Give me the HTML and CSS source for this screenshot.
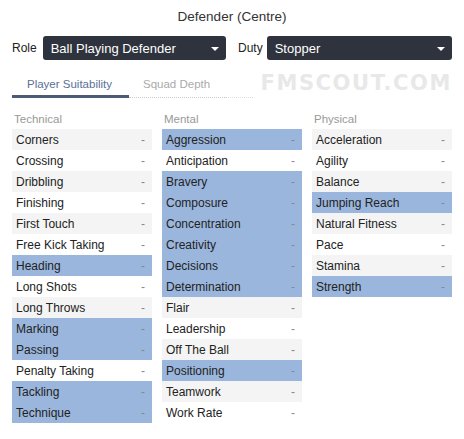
FILE: index.html
```html
<!DOCTYPE html>
<html>
<head>
<meta charset="utf-8">
<link rel="stylesheet" href="styles.css">
</head>
<body>
<div class="page">
  <div class="title">Defender (Centre)</div>
  <div class="selectors">
    <div class="sel">
      <span class="lbl">Role</span>
      <div class="dropdown"><span>Ball Playing Defender</span><span class="caret"></span></div>
    </div>
    <div class="sel duty">
      <span class="lbl">Duty</span>
      <div class="dropdown"><span>Stopper</span><span class="caret"></span></div>
    </div>
  </div>
  <div class="tabs">
    <div class="tab active">Player Suitability</div>
    <div class="tab">Squad Depth</div>
    <div class="tab-rest"></div>
    <div class="watermark">FMSCOUT.COM</div>
  </div>
  <div class="cols">
    <div class="col">
      <div class="head">Technical</div>
      <div class="row odd"><span>Corners</span><span class="d">-</span></div>
      <div class="row"><span>Crossing</span><span class="d">-</span></div>
      <div class="row odd"><span>Dribbling</span><span class="d">-</span></div>
      <div class="row"><span>Finishing</span><span class="d">-</span></div>
      <div class="row odd"><span>First Touch</span><span class="d">-</span></div>
      <div class="row"><span>Free Kick Taking</span><span class="d">-</span></div>
      <div class="row hl"><span>Heading</span><span class="d">-</span></div>
      <div class="row"><span>Long Shots</span><span class="d">-</span></div>
      <div class="row odd"><span>Long Throws</span><span class="d">-</span></div>
      <div class="row hl"><span>Marking</span><span class="d">-</span></div>
      <div class="row hl"><span>Passing</span><span class="d">-</span></div>
      <div class="row"><span>Penalty Taking</span><span class="d">-</span></div>
      <div class="row hl"><span>Tackling</span><span class="d">-</span></div>
      <div class="row hl"><span>Technique</span><span class="d">-</span></div>
    </div>
    <div class="col">
      <div class="head">Mental</div>
      <div class="row hl"><span>Aggression</span><span class="d">-</span></div>
      <div class="row"><span>Anticipation</span><span class="d">-</span></div>
      <div class="row hl"><span>Bravery</span><span class="d">-</span></div>
      <div class="row hl"><span>Composure</span><span class="d">-</span></div>
      <div class="row hl"><span>Concentration</span><span class="d">-</span></div>
      <div class="row hl"><span>Creativity</span><span class="d">-</span></div>
      <div class="row hl"><span>Decisions</span><span class="d">-</span></div>
      <div class="row hl"><span>Determination</span><span class="d">-</span></div>
      <div class="row odd"><span>Flair</span><span class="d">-</span></div>
      <div class="row"><span>Leadership</span><span class="d">-</span></div>
      <div class="row odd"><span>Off The Ball</span><span class="d">-</span></div>
      <div class="row hl"><span>Positioning</span><span class="d">-</span></div>
      <div class="row odd"><span>Teamwork</span><span class="d">-</span></div>
      <div class="row"><span>Work Rate</span><span class="d">-</span></div>
    </div>
    <div class="col">
      <div class="head">Physical</div>
      <div class="row odd"><span>Acceleration</span><span class="d">-</span></div>
      <div class="row"><span>Agility</span><span class="d">-</span></div>
      <div class="row odd"><span>Balance</span><span class="d">-</span></div>
      <div class="row hl"><span>Jumping Reach</span><span class="d">-</span></div>
      <div class="row odd"><span>Natural Fitness</span><span class="d">-</span></div>
      <div class="row"><span>Pace</span><span class="d">-</span></div>
      <div class="row odd"><span>Stamina</span><span class="d">-</span></div>
      <div class="row hl"><span>Strength</span><span class="d">-</span></div>
    </div>
  </div>
</div>
</body>
</html>
```
FILE: styles.css
```css
html, body {
  margin: 0;
  padding: 0;
  background: #ffffff;
}
body {
  font-family: "Liberation Sans", Arial, sans-serif;
  color: #222222;
  font-size: 12px;
}
.page {
  width: 440px;
  padding: 0 12px;
}
.title {
  height: 24px;
  padding-top: 8px;
  box-sizing: border-box;
  text-align: center;
  font-size: 13.5px;
  color: #333;
  line-height: 18px;
}
.selectors {
  display: flex;
  gap: 12px;
  margin-top: 12px;
  height: 24px;
}
.sel {
  display: flex;
  align-items: center;
  flex: 1;
}
.lbl {
  font-size: 12px;
  color: #222;
  margin-right: 6px;
}
.sel.duty .lbl {
  margin-right: 4px;
}
.dropdown {
  flex: 1;
  height: 24px;
  background: #2f333d;
  border-radius: 3px;
  color: #ffffff;
  font-size: 13px;
  display: flex;
  align-items: center;
  justify-content: space-between;
  padding: 0 7px 0 8px;
  box-sizing: border-box;
}
.caret {
  width: 0;
  height: 0;
  border-left: 4px solid transparent;
  border-right: 4px solid transparent;
  border-top: 4px solid #ffffff;
  margin-top: 1px;
}
.tabs {
  position: relative;
  display: flex;
  align-items: flex-end;
  margin-top: 14px;
  height: 24px;
}
.tab {
  font-size: 11.5px;
  color: #aaaaaa;
  padding: 0 15px 7px 14px;
  border-bottom: 1px dotted #cccccc;
}
.tab.active {
  color: #5b6f94;
  border-bottom: 3px solid #4e5b74;
  padding: 0 17px 5px 15px;
}
.tab-rest {
  width: 28px;
  border-bottom: 1px dotted #dddddd;
}
.watermark {
  position: absolute;
  right: 0;
  top: -3px;
  font-family: "DejaVu Sans", sans-serif;
  font-weight: bold;
  font-size: 21px;
  letter-spacing: 1.6px;
  color: #e8e8e8;
}
.cols {
  display: flex;
  gap: 10px;
  margin-top: 11px;
}
.col {
  width: 140px;
}
.head {
  height: 20px;
  color: #999999;
  font-size: 11.5px;
  line-height: 20px;
  padding-left: 2px;
}
.row {
  height: 21px;
  display: flex;
  align-items: center;
  justify-content: space-between;
  padding: 0 7px 0 4px;
  background: #ffffff;
}
.row.odd {
  background: #f4f4f4;
}
.row.hl {
  background: #9bb6dd;
}
.d {
  color: #888888;
}
```
